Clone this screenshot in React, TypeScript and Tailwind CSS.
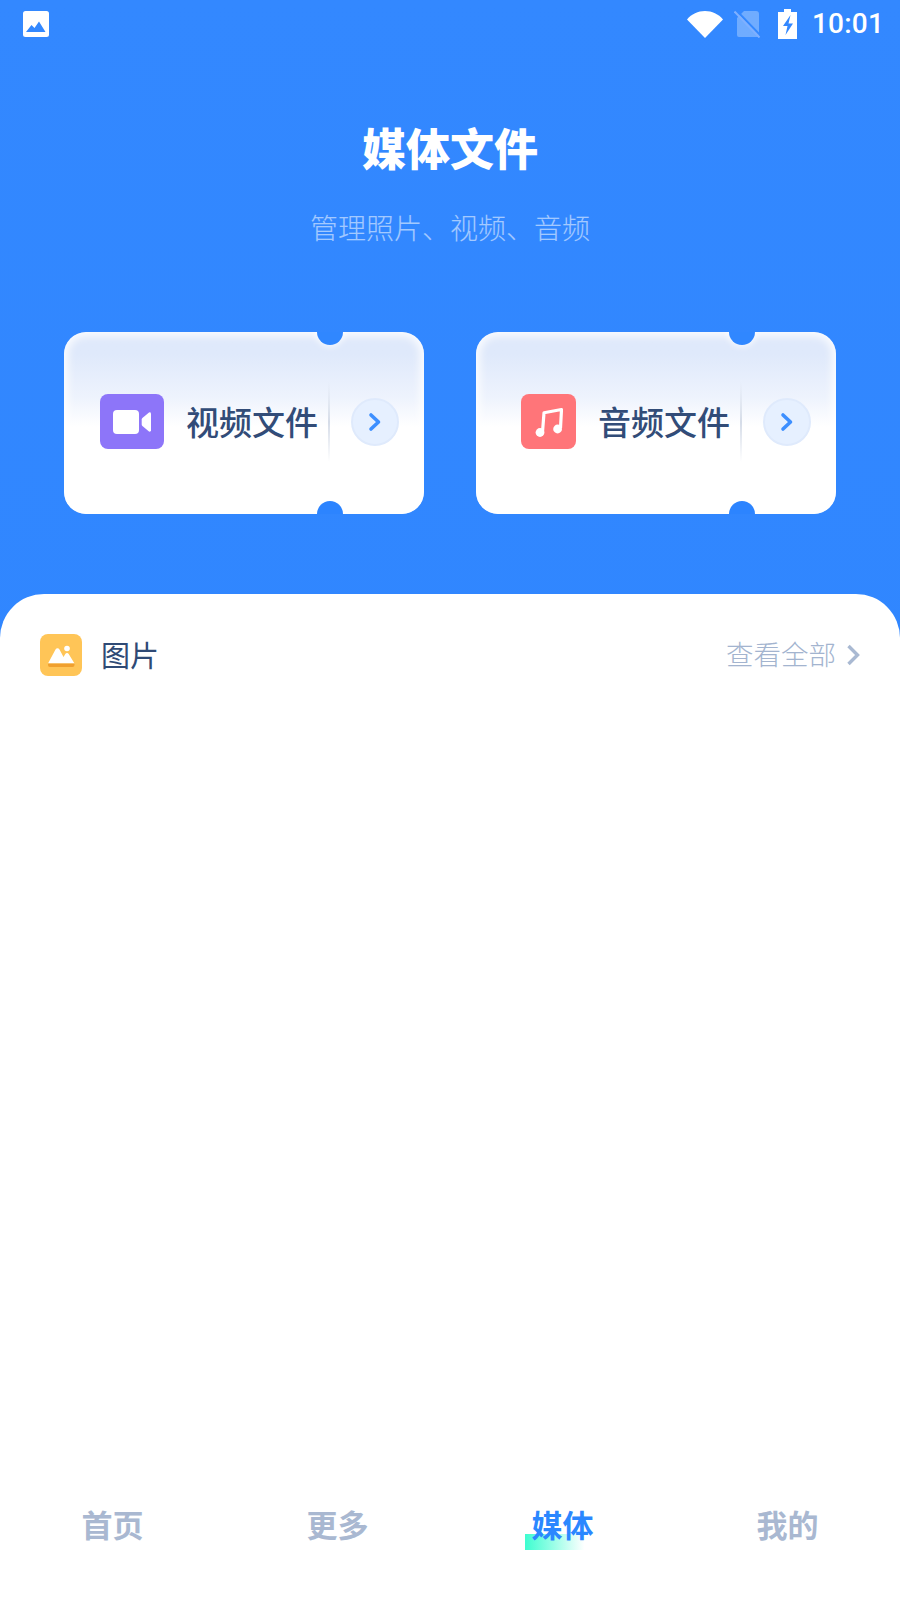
const cjk = "font-['Noto_Sans_CJK_SC','Noto_Sans',sans-serif]";

const VideoIcon = () => (
  <svg width="38" height="24" viewBox="0 0 38 24" fill="white">
    <rect x="0" y="0" width="26" height="24" rx="4" />
    <path d="M36 2.5a1.5 1.5 0 0 1 2 1.2v16.6a1.5 1.5 0 0 1-2 1.2l-6.6-5.6a2 2 0 0 1-.7-1.5V9.6a2 2 0 0 1 .7-1.5z" />
  </svg>
);

const MusicIcon = () => (
  <svg width="28" height="32" viewBox="0 0 28 32" fill="none">
    <path d="M7.5 26L9 6.8L26.500 3.5L25.500 22" stroke="white" strokeWidth="3.2" strokeLinejoin="round" />
    <circle cx="5" cy="26.5" r="4.4" fill="white" />
    <circle cx="22.6" cy="23" r="4.4" fill="white" />
  </svg>
);

const Ticket = ({ title, icon, iconBox, gapClass }: { title: string; icon: React.ReactNode; iconBox: string; gapClass: string }) => (
  <div className="relative w-[360px] h-[182px] rounded-[22px] overflow-hidden bg-gradient-to-b from-[#dfe9fb] from-[12%] via-[#eef3fd] via-[36%] to-white to-[52%] flex items-center pb-[3px]">
    <div className="absolute inset-0 rounded-[22px] shadow-[inset_0_0_9px_4px_rgba(255,255,255,0.85)]" />
    <div className="absolute left-[253px] -top-[13px] w-[26px] h-[26px] rounded-full bg-[#3087ff] shadow-[0_0_6px_2px_rgba(255,255,255,0.7)]" />
    <div className="absolute left-[253px] -bottom-[13px] w-[26px] h-[26px] rounded-full bg-[#2c84ff]" />
    <div className={`relative flex items-center justify-center h-[55px] rounded-[8px] ${iconBox}`}>{icon}</div>
    <span className={`relative text-[33px] leading-none font-medium text-[#324c78] whitespace-nowrap ${gapClass} ${cjk}`}>{title}</span>
    <div className="relative ml-[10px] w-[2px] h-[80px] bg-gradient-to-b from-transparent via-[#d5dce8] to-transparent" />
    <div className="relative ml-[21px] w-[48px] h-[48px] rounded-full bg-[#e6f0ff] border-2 border-[#dfeafc] flex items-center justify-center">
      <svg width="14" height="20" viewBox="0 0 14 20" fill="none">
        <path d="M3 3l7.5 7L3 17" stroke="#3d8fff" strokeWidth="3.6" strokeLinecap="round" strokeLinejoin="round" />
      </svg>
    </div>
  </div>
);

const tabs = ["首页", "更多", "媒体", "我的"];

export default function App() {
  return (
    <div className={`w-[900px] h-[1600px] flex flex-col overflow-hidden bg-gradient-to-b from-[#3388ff] to-[#2c84ff] ${cjk}`}>
      {/* status bar */}
      <div className="h-[48px] flex items-center pl-[23px] pr-[16px] shrink-0">
        <svg width="26" height="26" viewBox="0 0 26 26">
          <rect width="26" height="26" rx="2.5" fill="white" />
          <path d="M3 21l5.5-7 3 3 4.5-6.5 6.500 10.500z" fill="#3388ff" />
        </svg>
        <div className="ml-auto flex items-center">
          <svg width="36" height="28" viewBox="0 0 36 28" fill="white">
            <path d="M0 9.500C4.500 4 11 1 18 1s13.500 3 18 8.500L18 28z" />
          </svg>
          <svg className="ml-[11px]" width="27" height="28" viewBox="0 0 27 28">
            <path d="M6 5l4-4h12a3 3 0 0 1 3 3v21a2 2 0 0 1-2 2H5a2 2 0 0 1-2-2V8z" fill="white" fillOpacity="0.3" />
            <path d="M2 0l25 26" stroke="#3388ff" strokeWidth="2" />
            <path d="M0.500 1.500l25 26" stroke="#7fb0ff" strokeWidth="2" />
          </svg>
          <svg className="ml-[17px]" width="19" height="30" viewBox="0 0 19 30">
            <path d="M6 0h7v3h6v27H0V3h6z" fill="white" />
            <path d="M12.500 6L5 17h4.500l-2 9L15 14.500h-4.500z" fill="#3388ff" />
          </svg>
          <span className="ml-[15px] text-[28px] leading-none text-white font-['Roboto',sans-serif] font-medium tracking-[0.2px]">10:01</span>
        </div>
      </div>

      {/* header */}
      <div className="flex flex-col items-center shrink-0 pt-[69px]">
        <h1 className="text-[44px] leading-[60px] font-black text-white">媒体文件</h1>
        <p className="mt-[30px] text-[28px] leading-[40px] font-light text-white/55">管理照片、视频、音频</p>
      </div>

      {/* file cards */}
      <div className="mt-[85px] flex gap-[52px] pl-[64px] shrink-0">
        <Ticket title="视频文件" icon={<VideoIcon />} iconBox="ml-[36px] w-[64px] bg-[#8d75f9]" gapClass="ml-[22px]" />
        <Ticket title="音频文件" icon={<MusicIcon />} iconBox="ml-[45px] w-[55px] bg-[#ff7579]" gapClass="ml-[22px]" />
      </div>

      {/* sheet */}
      <div className="mt-[80px] flex-1 bg-white rounded-t-[44px] flex flex-col">
        <div className="mt-[40px] flex items-center pl-[40px] pr-[40px]">
          <div className="w-[42px] h-[42px] rounded-[8px] bg-[#ffc557]">
            <svg width="42" height="42" viewBox="0 0 42 42">
              <path d="M8 29.500L15.500 15.500c1-1.800 3-1.800 4 0L23.500 23l1.800-3c.8-1.300 2.600-1.300 3.400 0L34.500 29.500z" fill="white" />
              <circle cx="27" cy="14.500" r="2.800" fill="white" />
              <path d="M8 29.500h26.500V31a2 2 0 0 1-2 2H10a2 2 0 0 1-2-2z" fill="#f0a02f" />
            </svg>
          </div>
          <span className="ml-[19px] mb-[2px] text-[29px] leading-none text-[#2f4a75]">图片</span>
          <span className="ml-auto mb-[2px] text-[27.500px] leading-none font-light text-[#a3b4cf]">查看全部</span>
          <svg className="ml-[10px]" width="14" height="22" viewBox="0 0 14 22" fill="none">
            <path d="M2.500 2l9 9-9 9" stroke="#a9b9d2" strokeWidth="3.400" />
          </svg>
        </div>

        {/* tab bar */}
        <div className="mt-auto grid grid-cols-4 pb-[59px]">
          {tabs.map((t) => (
            <div key={t} className="flex justify-center">
              <span className={`relative text-[31px] leading-[34px] font-bold ${t === "媒体" ? "text-[#2b87ff]" : "text-[#a9b8d1]"}`}>
                {t === "媒体" && (
                  <span className="absolute -left-[7px] top-[27px] w-[66px] h-[16px] bg-gradient-to-r from-[#3dfdd0] to-transparent to-[90%]" />
                )}
                <span className="relative">{t}</span>
              </span>
            </div>
          ))}
        </div>
      </div>
    </div>
  );
}
